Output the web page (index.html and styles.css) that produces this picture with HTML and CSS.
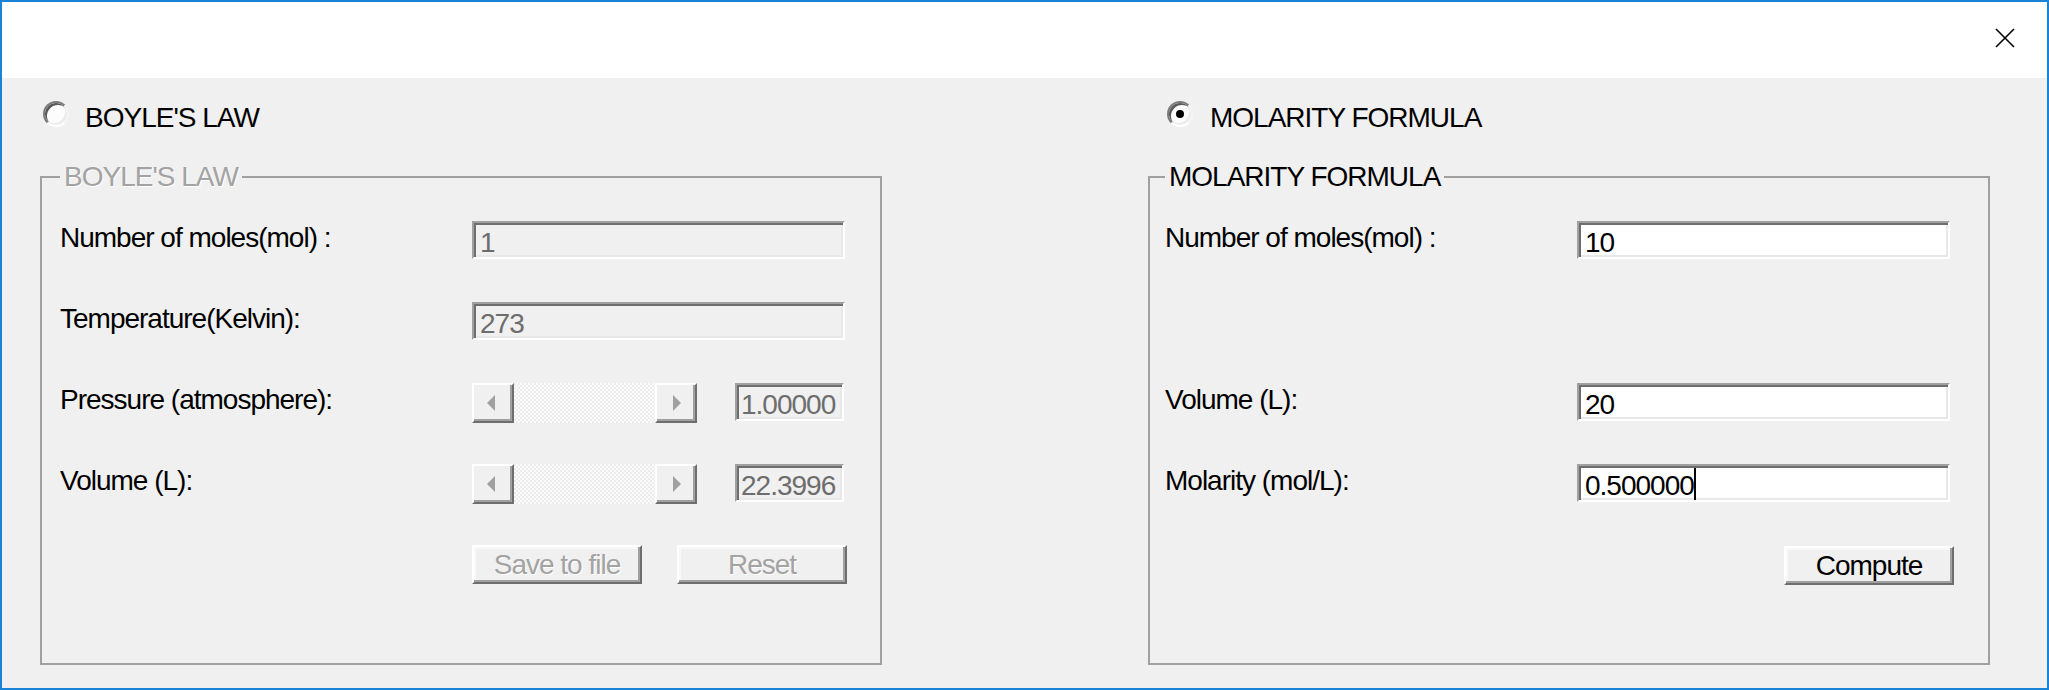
FILE: index.html
```html
<!DOCTYPE html>
<html>
<head>
<meta charset="utf-8">
<title>Chemistry Calculator</title>
<link rel="stylesheet" href="styles.css">
</head>
<body>
<div class="window">
  <div class="titlebar">
    <svg class="close" viewBox="0 0 20 20"><path d="M1 1L19 19M19 1L1 19" stroke="#000" stroke-width="1.6" fill="none"/></svg>
  </div>
  <div class="client">
    <section class="col col-left">
      <div class="radio-row r-left"><span class="radio"></span><span class="radio-label">BOYLE'S LAW</span></div>
      <fieldset class="group group-left">
        <legend class="legend-dis">BOYLE'S LAW</legend>
        <div class="rows">
          <div class="row">
            <span class="label">Number of moles(mol) :</span>
            <div class="controls"><div class="edit dis edit-w">1</div></div>
          </div>
          <div class="row">
            <span class="label">Temperature(Kelvin):</span>
            <div class="controls"><div class="edit dis edit-w">273</div></div>
          </div>
          <div class="row">
            <span class="label">Pressure (atmosphere):</span>
            <div class="controls">
              <div class="scroll"><span class="sbtn"><i class="arr arr-l"></i></span><span class="track"></span><span class="sbtn"><i class="arr arr-r"></i></span></div>
              <div class="edit dis edit-s">1.00000</div>
            </div>
          </div>
          <div class="row">
            <span class="label">Volume (L):</span>
            <div class="controls">
              <div class="scroll"><span class="sbtn"><i class="arr arr-l"></i></span><span class="track"></span><span class="sbtn"><i class="arr arr-r"></i></span></div>
              <div class="edit dis edit-s">22.3996</div>
            </div>
          </div>
          <div class="row">
            <span class="label"></span>
            <div class="controls btns">
              <button class="btn btn-dis" disabled>Save to file</button>
              <button class="btn btn-dis" disabled>Reset</button>
            </div>
          </div>
        </div>
      </fieldset>
    </section>
    <section class="col col-right">
      <div class="radio-row r-right"><span class="radio checked"></span><span class="radio-label">MOLARITY FORMULA</span></div>
      <fieldset class="group group-right">
        <legend>MOLARITY FORMULA</legend>
        <div class="rows">
          <div class="row">
            <span class="label">Number of moles(mol) :</span>
            <div class="controls"><div class="edit edit-w">10</div></div>
          </div>
          <div class="row"></div>
          <div class="row">
            <span class="label">Volume (L):</span>
            <div class="controls"><div class="edit edit-w">20</div></div>
          </div>
          <div class="row">
            <span class="label">Molarity (mol/L):</span>
            <div class="controls"><div class="edit edit-w">0.500000<span class="caret"></span></div></div>
          </div>
          <div class="row">
            <span class="label"></span>
            <div class="controls ctl-r"><button class="btn">Compute</button></div>
          </div>
        </div>
      </fieldset>
    </section>
  </div>
</div>
</body>
</html>
```
FILE: styles.css
```css
* { box-sizing: border-box; }
body {
  margin: 0;
  font-family: "Liberation Sans", Arial, sans-serif;
  font-size: 28px;
  letter-spacing: -1px;
  color: #000;
}
.window {
  width: 2049px;
  height: 690px;
  border: 2px solid #1883d7;
  display: flex;
  flex-direction: column;
  background: #f0f0f0;
}
.titlebar {
  height: 76px;
  flex: none;
  background: #fff;
  display: flex;
  justify-content: flex-end;
  align-items: flex-start;
  padding: 26px 32px 0 0;
}
.close { width: 20px; height: 20px; display: block; }
.client {
  flex: 1;
  display: flex;
  padding-left: 38px;
  gap: 266px;
}
.col { width: 842px; flex: none; }

.radio-row {
  display: flex;
  align-items: flex-start;
  height: 30px;
  margin-top: 25px;
}
.radio {
  position: relative;
  width: 26px;
  height: 26px;
  margin-top: -2px;
  flex: none;
  border-radius: 50%;
  background: #fcfcfc;
  border: 2px solid;
  border-color: #7a7a7a #f4f4f4 #ffffff #7a7a7a;
  box-shadow: inset 2px 2px 0 #5a5a5a, inset -2px -2px 0 #ececec;
}
.radio.checked::after {
  content: "";
  position: absolute;
  left: 7px;
  top: 7px;
  width: 8px;
  height: 8px;
  border-radius: 50%;
  background: #000;
}
.radio-label { line-height: 30px; margin-left: 16px; white-space: nowrap; }
.r-left .radio { margin-left: 3px; }
.r-right .radio { margin-left: 19px; }
.r-right .radio-label { margin-left: 17px; }

.group {
  margin: 29px 0 0 0;
  height: 503px;
  border: 2px solid #a0a0a0;
  padding: 29px 0 0 18px;
  min-width: 0;
}
.group-right { padding-left: 15px; }
.group legend {
  padding: 0 4px;
  line-height: 30px;
  white-space: nowrap;
}
.legend-dis { color: #a3a3a3; text-shadow: 1px 1px 0 #fff; }

.rows { display: flex; flex-direction: column; gap: 41px; }
.row { display: flex; height: 40px; align-items: flex-start; }
.label { width: 412px; line-height: 34px; white-space: nowrap; flex: none; }
.controls { display: flex; align-items: flex-start; }

.edit {
  height: 38px;
  border: 2px solid;
  border-color: #a0a0a0 #ffffff #ffffff #a0a0a0;
  box-shadow: inset 2px 2px 0 #6e6e6e, inset -2px -2px 0 #e8e8e8;
  padding: 5px 0 0 6px;
  line-height: 30px;
  background: #fff;
  white-space: nowrap;
  overflow: hidden;
}
.edit.dis { background: #f0f0f0; color: #6d6d6d; }
.edit-w { width: 373px; }
.edit-s { width: 109px; margin-left: 38px; padding-left: 4px; }
.caret {
  display: inline-block;
  width: 2px;
  height: 33px;
  margin-top: -3px;
  vertical-align: top;
  background: #000;
}

.scroll { width: 225px; height: 40px; display: flex; }
.sbtn {
  width: 42px;
  height: 40px;
  flex: none;
  background: #f0f0f0;
  border: 2px solid;
  border-color: #ffffff #6e6e6e #6e6e6e #ffffff;
  box-shadow: inset -2px -2px 0 #a0a0a0;
  display: flex;
  align-items: center;
  justify-content: center;
}
.track {
  flex: 1;
  background: repeating-conic-gradient(#fbfbfb 0 25%, #ececec 0 50%) 0 0 / 4px 4px;
}
.arr { display: block; width: 0; height: 0; border-top: 8px solid transparent; border-bottom: 8px solid transparent; }
.arr-l { border-right: 8px solid #a0a0a0; margin-left: -4px; }
.arr-r { border-left: 8px solid #a0a0a0; margin-left: 2px; }

.btns { gap: 35px; }
.btn {
  width: 170px;
  height: 39px;
  padding: 0;
  margin: 0;
  background: #f0f0f0;
  border: 2px solid;
  border-color: #ffffff #6e6e6e #6e6e6e #ffffff;
  box-shadow: inset -2px -2px 0 #a0a0a0, inset 2px 2px 0 #f8f8f8;
  font: inherit;
  letter-spacing: inherit;
  line-height: 35px;
  color: #000;
  text-align: center;
}
.btn-dis { color: #a3a3a3; text-shadow: 1px 1px 0 #fff; }
.ctl-r { width: 377px; justify-content: flex-end; padding-top: 1px; }
```
